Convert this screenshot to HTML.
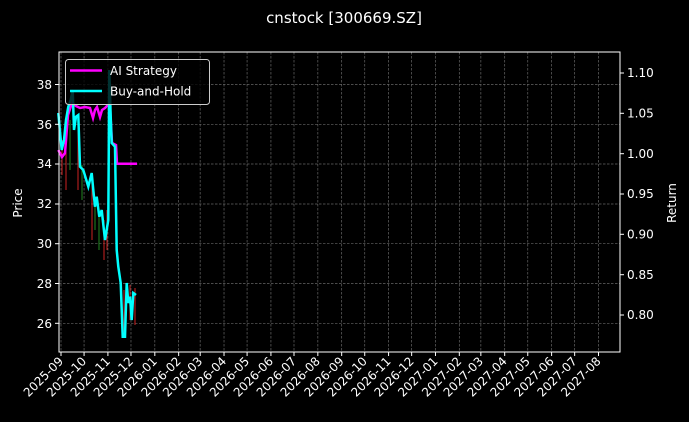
<!DOCTYPE html>
<html><head><meta charset="utf-8"><style>
html,body{margin:0;padding:0;background:#000;width:689px;height:422px;overflow:hidden}
svg{display:block}
text{font-family:"DejaVu Sans","Liberation Sans",sans-serif;fill:#fff}
</style></head><body>
<svg width="689" height="422" viewBox="0 0 689 422">
<rect width="689" height="422" fill="#000"/>
<text x="344" y="23" font-size="15" text-anchor="middle">cnstock [300669.SZ]</text>
<g stroke="#666" stroke-width="0.7" stroke-dasharray="2.5,1.5">
<line x1="59" x2="620" y1="84.5" y2="84.5"/><line x1="59" x2="620" y1="124.3" y2="124.3"/>
<line x1="59" x2="620" y1="164" y2="164"/><line x1="59" x2="620" y1="204" y2="204"/>
<line x1="59" x2="620" y1="243.7" y2="243.7"/><line x1="59" x2="620" y1="283.5" y2="283.5"/>
<line x1="59" x2="620" y1="323.3" y2="323.3"/>
<g id="vg"></g>
</g>
<g id="xt"></g>
<g stroke-width="1">
<line x1="62" y1="140" x2="62" y2="175" stroke="#c22"/><line x1="66" y1="150" x2="66" y2="190" stroke="#c22"/>
<line x1="70" y1="120" x2="70" y2="170" stroke="#282"/><line x1="78" y1="130" x2="78" y2="190" stroke="#c22"/>
<line x1="82" y1="165" x2="82" y2="200" stroke="#282"/><line x1="92" y1="180" x2="92" y2="240" stroke="#c22"/>
<line x1="95" y1="200" x2="95" y2="230" stroke="#282"/><line x1="99" y1="210" x2="99" y2="250" stroke="#282"/>
<line x1="104" y1="220" x2="104" y2="260" stroke="#c22"/><line x1="107" y1="210" x2="107" y2="250" stroke="#c22"/>
<line x1="124" y1="290" x2="124" y2="338" stroke="#c22"/><line x1="130" y1="285" x2="130" y2="320" stroke="#c22"/>
<line x1="135" y1="288" x2="135" y2="325" stroke="#c22"/>
</g>
<polyline fill="none" stroke="#ff00ff" stroke-width="2.5" points="58.3,150 62,157 65,153 68,115 72,103 76,106 80,108 85,107 90,108 93,118 95,110 97,107 100,117 102,110 105,108 108,105 110,106 112,143 116,145 117,163.7 137,163.7"/>
<polyline fill="none" stroke="#00ffff" stroke-width="2.5" points="58.3,113 61.7,150 64,140 66,120 68.3,106.7 70.7,100 72.7,90 74,130 76,116.7 78.3,115 80,166.7 83.3,170 88.3,186.7 91.7,173 93.3,190 95,206.7 96.7,196.7 99.3,216.7 101.7,210 105,240 108.3,220 109.3,70 110.7,116.7 111.7,143 115,146.7 116.7,250 118.3,266.7 120.7,283 122.7,336.7 125,336.7 126.7,283 128.3,303 130,296.7 131.7,320 133.3,293 136,295"/>
<rect x="59" y="52" width="561" height="300" fill="none" stroke="#fff" stroke-width="1"/>
<g stroke="#fff" stroke-width="1">
<line x1="55" x2="59" y1="84.5" y2="84.5"/><line x1="55" x2="59" y1="124.3" y2="124.3"/>
<line x1="55" x2="59" y1="164" y2="164"/><line x1="55" x2="59" y1="204" y2="204"/>
<line x1="55" x2="59" y1="243.7" y2="243.7"/><line x1="55" x2="59" y1="283.5" y2="283.5"/>
<line x1="55" x2="59" y1="323.3" y2="323.3"/>
<line x1="620" x2="624" y1="73" y2="73"/><line x1="620" x2="624" y1="113.3" y2="113.3"/>
<line x1="620" x2="624" y1="153.7" y2="153.7"/><line x1="620" x2="624" y1="194" y2="194"/>
<line x1="620" x2="624" y1="234.3" y2="234.3"/><line x1="620" x2="624" y1="274.7" y2="274.7"/>
<line x1="620" x2="624" y1="315" y2="315"/>
</g>
<g font-size="12" text-anchor="end">
<text x="52" y="89">38</text><text x="52" y="129">36</text><text x="52" y="168">34</text>
<text x="52" y="208">32</text><text x="52" y="248">30</text><text x="52" y="288">28</text><text x="52" y="328">26</text>
</g>
<g font-size="12">
<text x="627" y="77">1.10</text><text x="627" y="117.5">1.05</text><text x="627" y="158">1.00</text>
<text x="627" y="198">0.95</text><text x="627" y="238.5">0.90</text><text x="627" y="279">0.85</text><text x="627" y="319">0.80</text>
</g>
<text transform="translate(22,203) rotate(-90)" font-size="12" text-anchor="middle">Price</text>
<text transform="translate(676,203) rotate(-90)" font-size="12" text-anchor="middle">Return</text>
<rect x="65.5" y="59.5" width="144" height="45" rx="3" fill="#000" fill-opacity="0.8" stroke="#ccc" stroke-width="1"/>
<line x1="70" x2="102" y1="70.5" y2="70.5" stroke="#ff00ff" stroke-width="2.5"/>
<line x1="70" x2="102" y1="91" y2="91" stroke="#00ffff" stroke-width="2.5"/>
<text x="110" y="75" font-size="12">AI Strategy</text>
<text x="110" y="95.5" font-size="12">Buy-and-Hold</text>
</svg>
<script>
(function(){
var ns="http://www.w3.org/2000/svg";
var labels=["2025-09","2025-10","2025-11","2025-12","2026-01","2026-02","2026-03","2026-04","2026-05","2026-06","2026-07","2026-08","2026-09","2026-10","2026-11","2026-12","2027-01","2027-02","2027-03","2027-04","2027-05","2027-06","2027-07","2027-08"];
var days=[30,31,30,31,31,28,31,30,31,30,31,31,30,31,30,31,31,28,31,30,31,30,31];
var x0=61,x1=598.5,total=0;days.forEach(function(d){total+=d});
var vg=document.getElementById("vg"),xt=document.getElementById("xt");
var acc=0;
for(var i=0;i<labels.length;i++){
 var x=x0+(x1-x0)*acc/total; if(i<days.length)acc+=days[i];
 var l=document.createElementNS(ns,"line");l.setAttribute("x1",x);l.setAttribute("x2",x);l.setAttribute("y1",52);l.setAttribute("y2",352);vg.appendChild(l);
 var t=document.createElementNS(ns,"line");t.setAttribute("x1",x);t.setAttribute("x2",x);t.setAttribute("y1",352);t.setAttribute("y2",356);t.setAttribute("stroke","#fff");xt.appendChild(t);
 var tx=document.createElementNS(ns,"text");tx.setAttribute("font-size","12");tx.setAttribute("text-anchor","end");
 tx.setAttribute("transform","translate("+(x+3)+",362) rotate(-45)");tx.textContent=labels[i];xt.appendChild(tx);
}
})();
</script>
</body></html>
